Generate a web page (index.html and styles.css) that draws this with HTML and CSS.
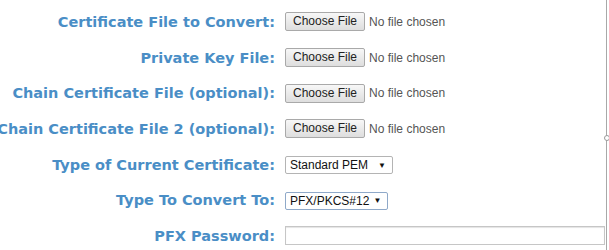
FILE: index.html
```html
<!DOCTYPE html>
<html lang="en">
<head>
    <meta charset="UTF-8">
    <title>Certificate Converter</title>
    <link rel="stylesheet" href="styles.css">
</head>
<body>
    <div class="page">
        <form class="convert-form">
            <!-- file rows -->
            <label class="field-label">Certificate File to Convert:</label>
            <div class="file-pick"><span class="file-btn">Choose File</span><span class="file-name">No file chosen</span></div>

            <label class="field-label">Private Key File:</label>
            <div class="file-pick"><span class="file-btn">Choose File</span><span class="file-name">No file chosen</span></div>

            <label class="field-label">Chain Certificate File (optional):</label>
            <div class="file-pick"><span class="file-btn">Choose File</span><span class="file-name">No file chosen</span></div>

            <label class="field-label">Chain Certificate File 2 (optional):</label>
            <div class="file-pick"><span class="file-btn">Choose File</span><span class="file-name">No file chosen</span></div>

            <!-- types -->
            <label class="field-label">Type of Current Certificate:</label>
            <div><span class="drop">Standard PEM<span class="drop-arrow">&#9660;</span></span></div>

            <label class="field-label">Type To Convert To:</label>
            <div><span class="drop drop-focus">PFX/PKCS#12<span class="drop-arrow">&#9660;</span></span></div>

            <!-- password -->
            <label class="field-label">PFX Password:</label>
            <div><input type="password" class="pass-input"></div>
        </form>
        <span class="edge-handle"></span>
    </div>
</body>
</html>
```

FILE: styles.css
```css
* {
    margin: 0;
    padding: 0;
    box-sizing: border-box;
}
body {
    background: #fff;
    overflow: hidden;
}
.page {
    position: relative;
    width: 607px;
    height: 250px;
    border-right: 1px solid #a8a8a8;
}
.edge-handle {
    position: absolute;
    right: -4px;
    top: 135px;
    width: 6px;
    height: 6px;
    border: 1px solid #9a9a9a;
    border-radius: 50%;
    background: #fff;
}
.convert-form {
    display: grid;
    grid-template-columns: 275px 1fr;
    grid-auto-rows: 35.7px;
    column-gap: 10px;
    align-items: center;
    padding-top: 4px;
    padding-right: 2px;
}
.field-label {
    display: flex;
    justify-content: flex-end;
    white-space: nowrap;
    font-family: "DejaVu Sans", Verdana, sans-serif;
    font-weight: bold;
    font-size: 14.5px;
    color: #4a8ec6;
}
.file-pick {
    display: flex;
    align-items: center;
    font-family: "Liberation Sans", Arial, sans-serif;
    font-size: 12px;
}
.file-btn {
    display: inline-block;
    height: 19px;
    line-height: 17px;
    padding: 0 7px;
    border: 1px solid #a9a9a9;
    border-radius: 2px;
    background: linear-gradient(#f7f7f7, #dedede);
    color: #222;
}
.file-name {
    margin-left: 4px;
    color: #555;
}
.drop {
    display: inline-flex;
    align-items: center;
    height: 18px;
    padding: 0 6px 0 4px;
    border: 1px solid #b4b4b4;
    border-radius: 2px;
    background: #fff;
    font-family: "Liberation Sans", Arial, sans-serif;
    font-size: 12px;
    color: #111;
}
.drop-focus {
    border-color: #8fa9c9;
}
.drop-arrow {
    font-size: 8px;
    margin-left: 10px;
}
.drop-focus .drop-arrow {
    margin-left: 4px;
}
.pass-input {
    display: block;
    width: 320px;
    height: 19px;
    border: 1px solid #c6c6c6;
    box-shadow: inset 0 1px 1px #e4e4e4;
    outline: none;
}
```
